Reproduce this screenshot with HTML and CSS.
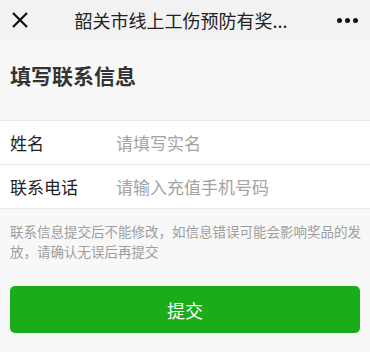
FILE: index.html
```html
<!DOCTYPE html>
<html lang="zh-CN">
<head>
    <meta charset="UTF-8">
    <title>填写联系信息</title>
    <link rel="stylesheet" href="styles.css">
</head>
<body>
    <div class="navbar">
        <div class="nav-side">
            <svg class="icon-close" width="18" height="18" viewBox="0 0 18 18">
                <path d="M2 2L16 16M16 2L2 16" stroke="#111" stroke-width="2.2" fill="none"/>
            </svg>
        </div>
        <div class="nav-title">韶关市线上工伤预防有奖...</div>
        <div class="nav-side nav-right">
            <span class="dot"></span><span class="dot"></span><span class="dot"></span>
        </div>
    </div>

    <h2 class="page-title">填写联系信息</h2>

    <div class="form-group">
        <div class="form-row">
            <label class="form-label">姓名</label>
            <input class="form-input" type="text" placeholder="请填写实名">
        </div>
        <div class="form-row">
            <label class="form-label">联系电话</label>
            <input class="form-input" type="tel" placeholder="请输入充值手机号码">
        </div>
    </div>

    <p class="tips">联系信息提交后不能修改，如信息错误可能会影响奖品的发放，请确认无误后再提交</p>

    <div class="btn-area">
        <button class="btn-submit">提交</button>
    </div>
</body>
</html>
```

FILE: styles.css
```css
*{
    padding: 0;
    margin: 0;
    box-sizing: border-box;
}
body{
    background-color: #f8f8f8;
    font-family: "Noto Sans CJK SC", "Noto Sans", sans-serif;
    color: #333333;
}
.navbar{
    height: 40px;
    background-color: #f2f2f2;
    display: flex;
    align-items: center;
}
.nav-side{
    width: 60px;
    display: flex;
    align-items: center;
    padding-left: 11px;
}
.nav-right{
    justify-content: flex-end;
    padding-left: 0;
    padding-right: 12px;
    gap: 3px;
}
.dot{
    width: 5px;
    height: 5px;
    border-radius: 50%;
    background-color: #111111;
}
.nav-title{
    flex: 1;
    text-align: center;
    font-size: 18px;
    line-height: 24px;
    color: #222222;
    white-space: nowrap;
    overflow: hidden;
    padding-right: 8px;
}
.page-title{
    font-size: 21px;
    line-height: 30px;
    font-weight: bold;
    color: #333333;
    padding: 20px 10px 30px;
}
.form-group{
    background-color: #ffffff;
    border-top: 1px solid #e8e8e8;
    border-bottom: 1px solid #e8e8e8;
}
.form-row{
    height: 43px;
    display: flex;
    align-items: center;
    padding-left: 10px;
}
.form-row + .form-row{
    height: 44px;
    border-top: 1px solid #e8e8e8;
}
.form-label{
    width: 106px;
    font-size: 17px;
    color: #222222;
}
.form-input{
    flex: 1;
    border: 0;
    outline: none;
    background: transparent;
    font-family: inherit;
    font-size: 17px;
    color: #333333;
}
.form-input::placeholder{
    color: #a3a3a3;
}
.tips{
    font-size: 13.5px;
    line-height: 20px;
    color: #9e9e9e;
    padding: 12px 6px 0 10px;
}
.btn-area{
    padding: 25px 10px 0;
}
.btn-submit{
    width: 100%;
    height: 47px;
    border: 0;
    border-radius: 5px;
    background-color: #1aad19;
    color: #ffffff;
    font-family: inherit;
    font-size: 18px;
}
```
